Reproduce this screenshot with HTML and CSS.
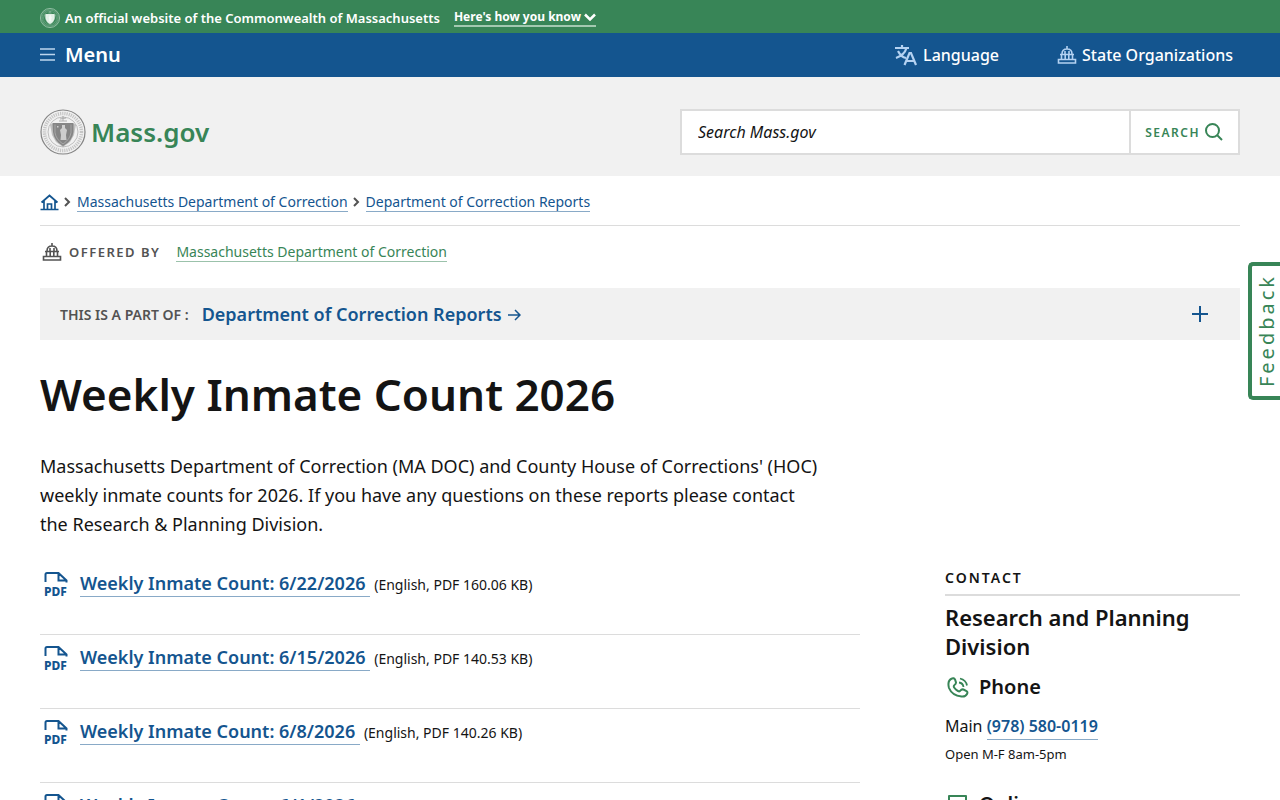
FILE: index.html
```
<!DOCTYPE html>
<html lang="en">
<head>
    <meta charset="UTF-8">
    <meta name="viewport" content="width=device-width, initial-scale=1.0">
    <title>Weekly Inmate Count 2026 | Mass.gov</title>

    <link rel="stylesheet" href="styles.css">
</head>
<body>
    <!-- Shared icons -->
    <svg class="sprite" aria-hidden="true">
        <symbol id="seal" viewBox="0 0 46 46">
            <circle cx="23" cy="23" r="22" fill="none" stroke="currentColor" stroke-width="1.200"/>
            <circle cx="23" cy="23" r="18.5" fill="none" stroke="currentColor" stroke-width="3.5" stroke-dasharray="1.2 1" opacity=".4"/>
            <circle cx="23" cy="23" r="15" fill="none" stroke="currentColor" stroke-width=".8" opacity=".6"/>
            <path d="M10 16q4-3 5 1l1 9 4 8 3 2 3-2 4-8 1-9q1-4 5-1-1 4-2 10l-4 7-7 5-7-5-4-7q-1-6-2-10z" fill="currentColor" opacity=".45"/>
            <path d="M12.5 14h21v9q-1 9-10.500 14Q14 32 13 23z" fill="currentColor"/>
            <path d="M15 15.500v8q1 7 8 11.500 7-4.500 8-11.500v-8" fill="none" stroke="#fff" stroke-width=".7" opacity=".4"/>
            <path d="M22 16h3v3l2 2-1 5 .5 5h-6l.5-5-1-5 2-2zM17 17h1.500v1.500H17z" fill="#fff" opacity=".6"/>
            <path d="M19 12h8M23 7v5m-3-2 6-1" stroke="currentColor" stroke-width="1" opacity=".6"/>
        </symbol>
        <symbol id="capitol" viewBox="0 0 20 20">
            <path d="M10 1v3M5 9q0-5 5-5t5 5M3 9.500h14M4.500 10v4M8.200 10v4M11.800 10v4M15.500 10v4M8 6v3M12 6v3M2 14.500h16M1.500 18h17v-3.500h-17z" fill="none" stroke="currentColor" stroke-width="1.600"/>
        </symbol>
        <symbol id="pdf" viewBox="0 0 26 26">
            <path d="M2.500 11V3.500q0-1.500 1.500-1.500H15.500L23.500 9.500v2M15.500 2v7.500h8" fill="none" stroke="currentColor" stroke-width="2"/>
            <text x="1" y="25" class="pdf-text">PDF</text>
        </symbol>
    </svg>

    <div class="official-banner">
        <svg class="official-seal" aria-hidden="true"><use href="#seal"/></svg>
        <span>An official website of the Commonwealth of Massachusetts</span>
        <button type="button" class="official-toggle">
            Here's how you know
            <svg width="12" height="8" viewBox="0 0 12 8"><path d="m1 1.500 5 5 5-5" fill="none" stroke="currentColor" stroke-width="2.500"/></svg>
        </button>
    </div>

    <nav class="navbar">
        <button type="button" class="menu-button">
            <svg width="15" height="13" viewBox="0 0 15 13"><path d="M0 1h15M0 6.500h15M0 12h15" stroke="#bdd6ee" stroke-width="1.600"/></svg>
            Menu
        </button>
        <div class="nav-tools">
            <button type="button">
                <svg class="nav-icon" width="24" height="22" viewBox="0 0 24 22"><path d="M1 4h14M8 1v3M4 7q3 6 8 7M12.500 4q-2 7-10.500 10M10.500 21l5-12h1.500l5 12M12.500 17h8" fill="none" stroke="currentColor" stroke-width="2.200"/></svg>
                Language
            </button>
            <button type="button">
                <svg class="nav-icon" width="20" height="20"><use href="#capitol"/></svg>
                State Organizations
            </button>
        </div>
    </nav>

    <header class="site-header">
        <a href="#" class="logo">
            <svg class="logo-seal" aria-hidden="true"><use href="#seal"/></svg>
            <span>Mass.gov</span>
        </a>
        <form class="search-form">
            <input type="text" aria-label="Search Mass.gov" placeholder="Search Mass.gov">
            <button type="submit">
                SEARCH
                <svg width="18" height="18" viewBox="0 0 18 18"><circle cx="7.500" cy="7.500" r="6.500" fill="none" stroke="currentColor" stroke-width="2"/><path d="m12 12 5 5" stroke="currentColor" stroke-width="2"/></svg>
            </button>
        </form>
    </header>

    <main class="container">
        <nav class="breadcrumbs" aria-label="Breadcrumbs">
            <a href="#" class="home" aria-label="Home">
                <svg width="19" height="17" viewBox="0 0 19 17"><path d="m1.500 8.500 8-7 8 7M4 6.500V15M15 6.500V15M.5 15.500h18M7.500 15v-5h4v5" fill="none" stroke="currentColor" stroke-width="1.700"/></svg>
            </a>
            <svg class="chevron" width="7" height="10" viewBox="0 0 7 10"><path d="m1 1 4 4-4 4" fill="none" stroke="currentColor" stroke-width="2"/></svg>
            <a href="#" class="text-link">Massachusetts Department of Correction</a>
            <svg class="chevron" width="7" height="10" viewBox="0 0 7 10"><path d="m1 1 4 4-4 4" fill="none" stroke="currentColor" stroke-width="2"/></svg>
            <a href="#" class="text-link">Department of Correction Reports</a>
        </nav>

        <div class="offered-by">
            <svg width="20" height="20" aria-hidden="true"><use href="#capitol"/></svg>
            <span class="offered-label">OFFERED BY</span>
            <a href="#" class="text-link">Massachusetts Department of Correction</a>
        </div>

        <div class="part-of">
            <span class="part-label">THIS IS A PART OF :</span>
            <a href="#">Department of Correction Reports
                <svg width="13" height="12" viewBox="0 0 13 12"><path d="M0 6h11.500M7 1l5 5-5 5" fill="none" stroke="currentColor" stroke-width="1.500"/></svg>
            </a>
            <button type="button" aria-label="Show more">
                <svg width="16" height="16" viewBox="0 0 16 16"><path d="M8 0v16M0 8h16" stroke="currentColor" stroke-width="2"/></svg>
            </button>
        </div>

        <h1>Weekly Inmate Count 2026</h1>
        <p class="intro">Massachusetts Department of Correction (MA DOC) and County House of Corrections' (HOC) weekly inmate counts for 2026. If you have any questions on these reports please contact the Research &amp; Planning Division.</p>

        <div class="columns">
            <ul class="downloads">
                <li>
                    <svg class="pdf-icon" aria-hidden="true"><use href="#pdf"/></svg>
                    <a href="#">Weekly Inmate Count: 6/22/2026&nbsp;</a>
                    <span>(English, PDF 160.06 KB)</span>
                </li>
                <li>
                    <svg class="pdf-icon" aria-hidden="true"><use href="#pdf"/></svg>
                    <a href="#">Weekly Inmate Count: 6/15/2026&nbsp;</a>
                    <span>(English, PDF 140.53 KB)</span>
                </li>
                <li>
                    <svg class="pdf-icon" aria-hidden="true"><use href="#pdf"/></svg>
                    <a href="#">Weekly Inmate Count: 6/8/2026&nbsp;</a>
                    <span>(English, PDF 140.26 KB)</span>
                </li>
                <li>
                    <svg class="pdf-icon" aria-hidden="true"><use href="#pdf"/></svg>
                    <a href="#">Weekly Inmate Count: 6/1/2026&nbsp;</a>
                </li>
            </ul>

            <aside class="contact">
                <h2>CONTACT</h2>
                <h3>Research and Planning Division</h3>
                <h4>
                    <svg width="24" height="22" viewBox="-2 -1 24 22"><path d="M5 1.500q2-1 3 1l1 3q0 1.500-1.500 2.500-1.500 1 0 3t3.500 3q1.500 1 2.500-.5t3-1l3 1.500q1.500 1 .5 3-1.500 3-5.500 2.500Q5 18.500 2 11 0 3.500 5 1.500z" fill="none" stroke="currentColor" stroke-width="2"/><path d="M12 5.500q4 .5 4.500 4.500M13 1.500q6 1.500 7 7" fill="none" stroke="currentColor" stroke-width="1.800"/></svg>
                    Phone
                </h4>
                <p class="phone">Main <a href="#">(978) 580-0119</a></p>
                <p class="hours">Open M-F 8am-5pm</p>
                <h4 class="online">
                    <svg width="24" height="22" viewBox="-2 0 24 22"><path d="M2 3h17v12H2zM7 20h8M11 15v5" fill="none" stroke="currentColor" stroke-width="2" stroke-linejoin="round"/></svg>
                    Online
                </h4>
            </aside>
        </div>
    </main>

    <button type="button" class="feedback">Feedback</button>
</body>
</html>
```

FILE: styles.css
```
* {
    margin: 0;
    padding: 0;
    box-sizing: border-box;
}

body {
    font-family: "Noto Sans", "Open Sans", sans-serif;
    font-size: 16px;
    color: #141414;
    background-color: #fff;
}

a {
    color: #14558f;
    text-decoration: none;
}

button {
    font-family: inherit;
    border: none;
    background: none;
    color: inherit;
    cursor: pointer;
}

svg {
    flex-shrink: 0;
}

.sprite {
    display: none;
}

.pdf-text {
    font-size: 12px;
    font-weight: 800;
    fill: currentColor;
}

/* Green banner on top */
.official-banner {
    display: flex;
    align-items: center;
    height: 33px;
    padding: 2px 40px 0;
    background-color: #388557;
    color: #fff;
    font-size: 13px;
    font-weight: 600;
}

.official-seal {
    width: 20px;
    height: 20px;
    margin-right: 5px;
    color: #e0efe5;
}

.official-toggle {
    margin-left: 14px;
    border-bottom: 2px solid #a3c9b1;
    font-size: 12px;
    font-weight: 700;
    line-height: 16px;
}

/* Navigation Bar */
.navbar {
    display: flex;
    justify-content: space-between;
    align-items: center;
    height: 44px;
    padding: 0 47px 1px 40px;
    background-color: #14558f;
    color: #fff;
}

.navbar button {
    display: flex;
    align-items: center;
    gap: 5px;
    font-size: 16px;
    font-weight: 500;
}

.navbar .menu-button {
    gap: 10px;
    font-size: 20px;
    font-weight: 600;
}

.nav-tools {
    display: flex;
    gap: 58px;
}

.nav-icon {
    color: #b4d2f2;
}

/* Logo and search */
.site-header {
    display: flex;
    justify-content: space-between;
    align-items: center;
    padding: 32px 40px 21px;
    background-color: #f1f1f1;
}

.logo {
    display: flex;
    align-items: center;
    gap: 5px;
    color: #388557;
    font-size: 26px;
    font-weight: 600;
}

.logo-seal {
    width: 46px;
    height: 46px;
    color: #858585;
}

.search-form {
    display: flex;
    width: 560px;
    height: 46px;
    border: 2px solid #dcdcdc;
    background-color: #fff;
}

.search-form input {
    flex: 1;
    min-width: 0;
    padding: 0 16px;
    border: none;
    font-family: inherit;
    font-size: 16px;
    font-style: italic;
}

.search-form input::placeholder {
    color: #141414;
}

.search-form button {
    display: flex;
    align-items: center;
    gap: 5px;
    padding: 0 15px 0 14px;
    border-left: 2px solid #dcdcdc;
    color: #388557;
    font-size: 12px;
    font-weight: 600;
    letter-spacing: 1.5px;
}

.container {
    padding: 0 40px 40px;
}

/* Breadcrumbs */
.breadcrumbs {
    display: flex;
    align-items: center;
    height: 50px;
    padding-top: 3px;
    border-bottom: 1px solid #dcdcdc;
    font-size: 14px;
}

.home {
    display: flex;
}

.chevron {
    margin: 0 6px 0 5px;
    color: #535353;
}

.text-link {
    line-height: 18px;
    border-bottom: 1px solid #89aac7;
}

.offered-by {
    display: flex;
    align-items: center;
    height: 52px;
    padding-left: 2px;
    color: #535353;
    font-size: 14px;
}

.offered-label {
    margin: 0 16px 0 7px;
    font-size: 13px;
    font-weight: 600;
    letter-spacing: 1.5px;
}

.offered-by .text-link {
    color: #388557;
    border-color: #9bc2ab;
}

.part-of {
    display: flex;
    align-items: center;
    height: 52px;
    margin-top: 10px;
    padding: 0 32px 0 20px;
    background-color: #f1f1f1;
    color: #14558f;
    font-size: 18px;
    font-weight: 600;
}

.part-of a svg {
    margin-left: 2px;
}

.part-label {
    margin-right: 13px;
    color: #535353;
    font-size: 14px;
}

.part-of button {
    display: flex;
    margin-left: auto;
}

h1 {
    margin-top: 23px;
    font-size: 44px;
    font-weight: 600;
    line-height: 62px;
}

.intro {
    max-width: 780px;
    margin-top: 27px;
    font-size: 18px;
    line-height: 29px;
}

.columns {
    display: grid;
    grid-template-columns: minmax(0, 1fr) 295px;
    gap: 85px;
    margin-top: 22px;
}

/* List of reports */
.downloads {
    list-style: none;
}

.downloads li {
    display: flex;
    align-items: baseline;
    height: 74px;
    padding: 9px 0 0 3px;
    border-bottom: 1px solid #dcdcdc;
}

.downloads a {
    margin: 0 4px 0 11px;
    border-bottom: 1px solid #89aac7;
    font-size: 18px;
    font-weight: 600;
    line-height: 26px;
}

.downloads span {
    font-size: 14px;
}

.pdf-icon {
    width: 26px;
    height: 26px;
    align-self: flex-start;
    margin-top: 1px;
    color: #14558f;
}

/* Contact column */
.contact {
    padding-top: 7px;
}

.contact h2 {
    padding-bottom: 6px;
    border-bottom: 2px solid #dcdcdc;
    font-size: 14px;
    font-weight: 600;
    letter-spacing: 2px;
    line-height: 20px;
}

.contact h3 {
    margin-top: 7px;
    font-size: 22px;
    font-weight: 600;
    line-height: 29px;
}

.contact h4 {
    display: flex;
    align-items: center;
    gap: 10px;
    margin-top: 12px;
    font-size: 20px;
    font-weight: 600;
    line-height: 28px;
}

.contact h4 svg {
    color: #388557;
}

.phone {
    margin-top: 11px;
    line-height: 28px;
}

.phone a {
    padding-bottom: 2px;
    border-bottom: 1px solid #89aac7;
    font-weight: 600;
}

.hours {
    margin-top: 4px;
    font-size: 13px;
    line-height: 20px;
}

.contact .online {
    margin-top: 26px;
}

.feedback {
    position: fixed;
    top: 262px;
    right: 0;
    width: 32px;
    height: 138px;
    padding-left: 2px;
    border: 4px solid #388557;
    border-right: none;
    border-radius: 5px 0 0 5px;
    background-color: #fff;
    color: #388557;
    font-size: 20px;
    letter-spacing: 3px;
    line-height: 26px;
    writing-mode: sideways-lr;
}
```
